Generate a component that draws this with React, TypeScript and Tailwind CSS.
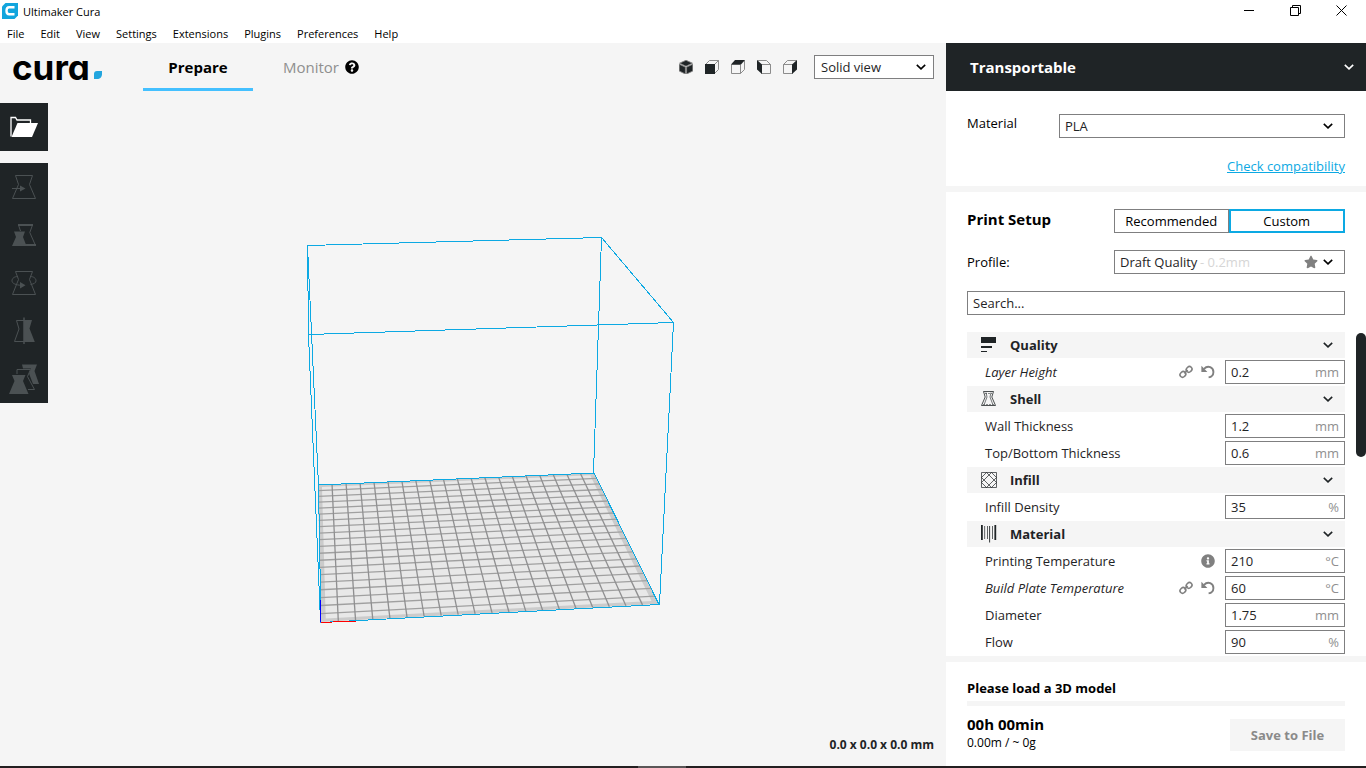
import { ReactNode, useState } from "react";
import { FaInfoCircle, FaQuestionCircle, FaStar } from "react-icons/fa";

const menuItems = ["File", "Edit", "View", "Settings", "Extensions", "Plugins", "Preferences", "Help"];

type Setting = {
  id: string;
  label: string;
  value: string;
  unit: string;
  changed?: boolean;
  info?: boolean;
};

type Category = {
  name: string;
  icon: ReactNode;
  settings: Setting[];
};

function Chevron({ className = "" }: { className?: string }) {
  return (
    <svg viewBox="0 0 10 6" className={`w-[10px] h-[6px] shrink-0 pointer-events-none ${className}`}>
      <path d="M0.8 0.8L5 4.8L9.2 0.8" fill="none" stroke="currentColor" strokeWidth="1.6" />
    </svg>
  );
}

function QualityIcon() {
  return (
    <svg viewBox="0 0 16 16" className="w-4 h-4">
      <path d="M0 0H15V6H0ZM0 9H11V11H0ZM0 14H6V15H0Z" fill="#1f2426" />
    </svg>
  );
}

function ShellIcon() {
  return (
    <svg viewBox="0 0 16 16" className="w-4 h-4" fill="none" stroke="#1f2426">
      <path d="M2.5 0.5H12.5L10.8 6L14.5 14.5H0.5L4.2 6Z" strokeWidth="0.8" />
      <path d="M5 1.5L6 6L3.2 13.5M10 1.5L9 6L11.8 13.5" strokeWidth="0.6" />
      <path d="M4 2.5H11M2 13.5H13" strokeWidth="0.5" strokeDasharray="2 1" />
    </svg>
  );
}

function InfillIcon() {
  return (
    <svg viewBox="0 0 16 16" className="w-4 h-4" fill="none" stroke="#1f2426" strokeWidth="0.7">
      <path d="M0.5 0.5H15.5V15.5H0.5Z" />
      <path d="M0.5 5.5L5.5 0.5M0.5 10.5L10.5 0.5M5.5 15.5L15.5 5.5M10.5 15.5L15.5 10.5" />
      <path d="M10.5 0.5L15.5 5.5M5.5 0.5L15.5 10.5M0.5 5.5L10.5 15.5M0.5 10.5L5.5 15.5" />
    </svg>
  );
}

function MaterialIcon() {
  return (
    <svg viewBox="0 0 16 18" className="w-4 h-[18px]" fill="#1f2426">
      <path d="M0 0H1.8V15H0ZM13.4 0H15.2V15H13.4Z" />
      <path d="M3.4 1H4.1V14H3.4ZM6 1H6.7V14H6ZM8.2 1H9.1V17.5H8.2ZM11 1H11.7V14H11Z" />
    </svg>
  );
}

function LinkIcon() {
  return (
    <svg viewBox="0 0 14 14" className="w-[14px] h-[14px]" fill="none" stroke="#808080" strokeWidth="1.6">
      <rect x="0.9" y="6.9" width="6" height="5" rx="2.5" transform="rotate(-45 3.9 9.4)" />
      <rect x="7.1" y="1.9" width="6" height="5" rx="2.5" transform="rotate(-45 10.1 4.4)" />
      <path d="M5.3 8.4L8.7 5" />
    </svg>
  );
}

function ResetIcon() {
  return (
    <svg viewBox="0 0 14 14" className="w-[14px] h-[14px]">
      <path d="M3 3.8C7 -0.2 12.6 2.4 12.4 7.2C12.3 9.8 10.6 11.9 7.6 12.4" fill="none" stroke="#808080" strokeWidth="1.9" />
      <path d="M0.4 0.8V7H6.4Z" fill="#808080" />
    </svg>
  );
}

const categories: Category[] = [
  {
    name: "Quality",
    icon: <QualityIcon />,
    settings: [{ id: "layer-height", label: "Layer Height", value: "0.2", unit: "mm", changed: true }],
  },
  {
    name: "Shell",
    icon: <ShellIcon />,
    settings: [
      { id: "wall", label: "Wall Thickness", value: "1.2", unit: "mm" },
      { id: "top-bottom", label: "Top/Bottom Thickness", value: "0.6", unit: "mm" },
    ],
  },
  {
    name: "Infill",
    icon: <InfillIcon />,
    settings: [{ id: "infill", label: "Infill Density", value: "35", unit: "%" }],
  },
  {
    name: "Material",
    icon: <MaterialIcon />,
    settings: [
      { id: "print-temp", label: "Printing Temperature", value: "210", unit: "°C", info: true },
      { id: "bed-temp", label: "Build Plate Temperature", value: "60", unit: "°C", changed: true },
      { id: "diameter", label: "Diameter", value: "1.75", unit: "mm" },
      { id: "flow", label: "Flow", value: "90", unit: "%" },
    ],
  },
];

const viewIcons = [
  {
    name: "3D view",
    icon: (
      <>
        <path d="M7 0.3L13.4 3.2L7 6.2L0.6 3.2Z" fill="#1f2426" />
        <path d="M0.2 4.2L6.4 7.1V14L0.2 11ZM13.8 4.2L7.6 7.1V14L13.8 11Z" fill="#1f2426" />
      </>
    ),
  },
  {
    name: "Front view",
    icon: (
      <>
        <path d="M0.5 4.5L4.5 0.5H13.5V9.5L9.5 13.5M9.5 4.5L13.5 0.5" />
        <path d="M0 4H10V14H0Z" fill="#1f2426" stroke="none" />
      </>
    ),
  },
  {
    name: "Top view",
    icon: (
      <>
        <path d="M0.5 4.5H9.5V13.5H0.5ZM9.5 13.5L13.5 9.5V0.5" />
        <path d="M0 4.5L4 0H14L10 4.5Z" fill="#1f2426" stroke="none" />
      </>
    ),
  },
  {
    name: "Left view",
    icon: (
      <>
        <path d="M4.5 4.5H13.5V13.5H4.5ZM0.5 0.5H9.5L13.5 4.5" />
        <path d="M0 0L5 4.5V14L0 9.5Z" fill="#1f2426" stroke="none" />
      </>
    ),
  },
  {
    name: "Right view",
    icon: (
      <>
        <path d="M0.5 4.5H9.5V13.5H0.5ZM0.5 4.5L4.5 0.5H13.5" />
        <path d="M14 0L9 4.5V14L14 9.5Z" fill="#1f2426" stroke="none" />
      </>
    ),
  },
];

const tools = [
  {
    name: "Move",
    icon: (
      <>
        <path d="M15.5 12.5H32.5L29.5 21.5L35.5 35.5H12.5L18.5 21.5Z" fill="none" />
        <path d="M12 25.5H21" fill="none" />
        <path d="M20 22.5L25.5 25.5L20 28.5Z" fill="#4b5153" stroke="none" />
      </>
    ),
  },
  {
    name: "Scale",
    icon: (
      <>
        <path d="M20.5 20L18.5 14M32.5 14L29.8 21.5L35.5 34.5" fill="none" />
        <path d="M18 13H33V15H18ZM24 33H36V35H24Z" fill="#4b5153" stroke="none" />
        <path d="M14 20.5H25L23 26L26.5 35H12L16 26Z" fill="#4b5153" stroke="none" />
      </>
    ),
  },
  {
    name: "Rotate",
    icon: (
      <>
        <path d="M15.5 12.5H32.5L29.5 20.5L35.5 35.5H12.5L18.5 20.5Z" fill="none" />
        <path d="M18 17.5C14 17.5 12 19.5 12 21.8C12 24.5 16 26 21 26.3M30 17.5C34 17.5 36 19.5 36 21.8C36 23.8 34 25 30.5 25.5" fill="none" />
        <path d="M20 23L25.5 26.2L20 29.4Z" fill="#4b5153" stroke="none" />
      </>
    ),
  },
  {
    name: "Mirror",
    icon: (
      <>
        <path d="M24 13.5H16.5L19 22L14.5 34.5H24" fill="none" />
        <path d="M24 13H32L29.5 21.5L34.8 35H24Z" fill="#4b5153" stroke="none" />
        <path d="M24 10.5V37" fill="none" strokeWidth="1.5" />
      </>
    ),
  },
  {
    name: "Per Model Settings",
    icon: (
      <>
        <path d="M22 9.5H37L34.5 16L39 29H33L29 18.5L31 13.5H23Z" fill="#4b5153" stroke="none" />
        <path d="M17 19V14.5H30.5L27.5 21.5L34.5 34.5H28" fill="none" />
        <path d="M12 20H25.5L23 26L28.5 39H9L14.5 26Z" fill="#4b5153" stroke="none" />
      </>
    ),
  },
];

// corners of the build plate on screen: back left, back right, front right, front left
const plate = [
  [318, 485],
  [594, 473],
  [659, 604],
  [321, 622],
];

// maps u, v in 0..1 onto the plate with perspective
function project(u: number, v: number) {
  const [[x0, y0], [x1, y1], [x2, y2], [x3, y3]] = plate;
  const dx1 = x1 - x2;
  const dx2 = x3 - x2;
  const dx3 = x0 - x1 + x2 - x3;
  const dy1 = y1 - y2;
  const dy2 = y3 - y2;
  const dy3 = y0 - y1 + y2 - y3;
  const det = dx1 * dy2 - dx2 * dy1;
  const g = (dx3 * dy2 - dx2 * dy3) / det;
  const h = (dx1 * dy3 - dx3 * dy1) / det;
  const w = g * u + h * v + 1;
  const x = ((x1 - x0 + g * x1) * u + (x3 - x0 + h * x3) * v + x0) / w;
  const y = ((y1 - y0 + g * y1) * u + (y3 - y0 + h * y3) * v + y0) / w;
  return `${x.toFixed(2)} ${y.toFixed(2)}`;
}

function quad(u0: number, v0: number, u1: number, v1: number) {
  return `M${project(u0, v0)}L${project(u1, v0)}L${project(u1, v1)}L${project(u0, v1)}Z`;
}

function Scene() {
  const steps = Array.from({ length: 19 }, (_, i) => (i + 1) / 20);

  return (
    <svg viewBox="0 91 946 675" className="absolute inset-0 w-full h-full">
      <path d={quad(0, 0, 1, 1)} fill="#cbcbcb" />
      <path d={quad(0.014, 0.02, 0.982, 0.98)} fill="#e8e8e8" />
      <g fill="none" strokeWidth="1.3">
        {steps.map((t) => (
          <path key={t} d={`M${project(0, t)}L${project(1, t)}`} stroke="#a0a0a0" />
        ))}
        {steps.map((t) => (
          <path key={t} d={`M${project(t, 0)}L${project(t, 1)}`} stroke="#8f8f90" />
        ))}
      </g>
      <g fill="none" stroke="#0ca9e3" strokeWidth="1" shapeRendering="crispEdges">
        <path d="M307.5 245.5L601.5 237.5L673.5 322.5L308.5 334.5Z" />
        <path d="M307.5 245.5L318.5 485.5M601.5 237.5L593.5 473.5M673.5 322.5L659.5 604.5M308.5 334.5L320.5 622" />
        <path d="M318.5 485L594 473L659 604.5L321 622.5Z" />
        <path d="M320.5 622V600" stroke="#0000ff" />
        <path d="M321 622.5L356 621" stroke="#ff0000" />
      </g>
    </svg>
  );
}

function SettingRow({ setting }: { setting: Setting }) {
  const [value, setValue] = useState(setting.value);

  return (
    <div className="flex items-center h-[26px] mb-px pl-[18px]">
      <label htmlFor={setting.id} className={`flex-1 text-[#1f2426] ${setting.changed ? "italic" : ""}`}>
        {setting.label}
      </label>
      <div className="flex items-center gap-2 mr-[10px]">
        {setting.changed && (
          <>
            <button type="button" aria-label="Linked setting">
              <LinkIcon />
            </button>
            <button type="button" aria-label="Reset to profile value">
              <ResetIcon />
            </button>
          </>
        )}
        {setting.info && <FaInfoCircle className="w-[14px] h-[14px] text-[#808080]" />}
      </div>
      <div className="flex items-center w-[120px] h-6 border border-[#7f7f80] bg-white px-[5px]">
        <input
          id={setting.id}
          type="text"
          value={value}
          onChange={(e) => setValue(e.target.value)}
          className="min-w-0 flex-1 outline-none text-[#1f2426]"
        />
        <span className="text-[#8f8f8f]">{setting.unit}</span>
      </div>
    </div>
  );
}

function TitleBar() {
  return (
    <header className="bg-white text-[11px] text-black">
      <div className="flex items-start h-6 px-0.5">
        <svg viewBox="0 0 16 16" className="w-4 h-4 mt-[3px]">
          <path d="M3.5 0H16V12.5L12.5 16H0V3.5Z" fill="#12a5dd" />
          <path d="M12.5 4.2H7.2C3.6 4.2 3.6 11.2 7.2 11.2H12.5" fill="none" stroke="#fff" strokeWidth="2.4" />
        </svg>
        <span className="ml-[5px] mt-0.5 flex-1">Ultimaker Cura</span>
        <button type="button" aria-label="Minimize" className="flex items-center justify-center w-[46px] h-5">
          <svg viewBox="0 0 11 11" className="w-[11px] h-[11px]">
            <path d="M0 5.5H10" stroke="#000" />
          </svg>
        </button>
        <button type="button" aria-label="Restore" className="flex items-center justify-center w-[46px] h-5">
          <svg viewBox="0 0 11 11" className="w-[11px] h-[11px]" fill="none" stroke="#000">
            <path d="M0.5 2.5H8.5V10.5H0.5ZM2.5 2.5V0.5H10.5V8.5H8.5" />
          </svg>
        </button>
        <button type="button" aria-label="Close" className="flex items-center justify-center w-[46px] h-5">
          <svg viewBox="0 0 11 11" className="w-[11px] h-[11px]">
            <path d="M0.5 0.5L10.5 10.5M10.5 0.5L0.5 10.5" stroke="#000" />
          </svg>
        </button>
      </div>
      <nav className="flex items-center h-[19px] pl-[7px] gap-4">
        {menuItems.map((item) => (
          <button key={item} type="button">
            {item}
          </button>
        ))}
      </nav>
    </header>
  );
}

function Viewport() {
  return (
    <main className="flex flex-col flex-1 min-w-0 bg-[#f5f5f5]">
      <div className="flex items-center h-12 px-3">
        <div className="flex items-end w-[131px]">
          <span className="font-[Inter] font-bold text-[35px] leading-8 text-black [font-feature-settings:'cv11']">cura</span>
          <svg viewBox="0 0 8 8" className="w-2 h-2 ml-1 mb-1">
            <path d="M3 0H8V3C8 6 6 8 3 8H0V3C0 1 1 0 3 0Z" fill="#22a5de" />
          </svg>
        </div>
        <button type="button" className="w-[110px] h-12 pt-[3px] border-b-3 border-[#44c0ff] text-[15px] font-bold text-black">
          Prepare
        </button>
        <button type="button" className="flex items-center gap-1.5 ml-[30px] text-[15px] text-[#8f8f8f]">
          Monitor
          <FaQuestionCircle className="w-[14px] h-[14px] text-black" />
        </button>
        <div className="flex items-center gap-3 ml-auto mr-[17px]">
          {viewIcons.map((view) => (
            <button key={view.name} type="button" aria-label={view.name}>
              <svg viewBox="0 0 14 14" className="w-[14px] h-[14px]" fill="none" stroke="#808080" strokeWidth="0.9">
                {view.icon}
              </svg>
            </button>
          ))}
        </div>
        <div className="flex items-center w-[120px] h-6 border border-[#7f7f80] bg-white pl-1.5 pr-[7px]">
          <select aria-label="View mode" className="appearance-none flex-1 outline-none text-[#1f2426]">
            <option>Solid view</option>
          </select>
          <Chevron />
        </div>
      </div>
      <div className="relative flex flex-col flex-1 pt-3">
        <Scene />
        <div className="relative flex flex-col gap-3 w-12">
          <button type="button" aria-label="Open file" className="h-12 bg-[#1f2426]">
            <svg viewBox="0 0 48 48" className="w-12 h-12">
              <path d="M11 33.5V14.5H15.5L17 17H30.5V20" fill="none" stroke="#fff" strokeWidth="1.3" />
              <path d="M17.5 20H38L32 34H11.5Z" fill="#fff" />
            </svg>
          </button>
          <div className="flex flex-col bg-[#1f2426]">
            {tools.map((tool) => (
              <button key={tool.name} type="button" aria-label={tool.name} className="h-12">
                <svg viewBox="0 0 48 48" className="w-12 h-12" stroke="#4b5153">
                  {tool.icon}
                </svg>
              </button>
            ))}
          </div>
        </div>
        <p className="relative mt-auto mb-3 mr-3 text-right text-[12px] leading-[18px] font-bold text-[#1f2426]">
          0.0 x 0.0 x 0.0 mm
        </p>
      </div>
    </main>
  );
}

function Sidebar() {
  const [mode, setMode] = useState("Custom");
  const [search, setSearch] = useState("");

  return (
    <aside className="flex flex-col w-[420px] shrink-0 bg-white">
      <button type="button" className="flex items-center justify-between h-12 pl-6 pr-3 bg-[#1f2426] text-white text-[15px] font-bold">
        Transportable
        <Chevron />
      </button>

      <section className="px-[21px] pt-[23px] pb-2 border-b-6 border-[#f5f5f5]">
        <div className="flex items-start justify-between">
          <label htmlFor="material" className="leading-[18px]">
            Material
          </label>
          <div className="flex items-center w-[286px] h-6 border border-[#7f7f80] pl-[5px] pr-[11px]">
            <select id="material" className="appearance-none flex-1 outline-none text-[#1f2426]">
              <option>PLA</option>
            </select>
            <Chevron />
          </div>
        </div>
        <div className="flex justify-end mt-[18px] h-[22px]">
          <a href="#compatibility" className="underline text-[#0ca9e3]">
            Check compatibility
          </a>
        </div>
      </section>

      <section className="relative flex flex-col gap-[17px] px-[21px] pt-[17px] border-b-6 border-[#f5f5f5]">
        <div className="flex items-start justify-between h-6">
          <h2 className="text-[15px] font-bold">Print Setup</h2>
          <div className="flex w-[231px] h-6">
            {["Recommended", "Custom"].map((name) => (
              <button
                key={name}
                type="button"
                onClick={() => setMode(name)}
                className={`flex-1 ${mode === name ? "border-2 border-[#0ca9e3]" : "border border-[#7f7f80]"}`}
              >
                {name}
              </button>
            ))}
          </div>
        </div>

        <div className="flex items-center justify-between h-6">
          <label htmlFor="profile">Profile:</label>
          <div className="flex items-center w-[231px] h-6 border border-[#7f7f80] pl-[5px] pr-[11px]">
            <select id="profile" className="appearance-none outline-none text-[#1f2426]">
              <option>Draft Quality</option>
            </select>
            <span className="ml-0.5 text-[#d6d6d6]">- 0.2mm</span>
            <FaStar className="w-[14px] h-[14px] ml-auto mr-[5px] text-[#808080]" />
            <Chevron />
          </div>
        </div>

        <input
          type="text"
          aria-label="Search settings"
          placeholder="Search..."
          value={search}
          onChange={(e) => setSearch(e.target.value)}
          className="h-6 border border-[#7f7f80] px-[5px] outline-none placeholder:text-[#1f2426]"
        />

        <div>
          {categories.map((category) => (
            <div key={category.name}>
              <button
                type="button"
                className="flex items-center w-full h-[26px] mb-px pl-[14px] pr-3 bg-[#f5f5f5] font-bold text-[#1f2426]"
              >
                {category.icon}
                <span className="ml-[13px] flex-1 text-left">{category.name}</span>
                <Chevron />
              </button>
              {category.settings.map((setting) => (
                <SettingRow key={setting.id} setting={setting} />
              ))}
            </div>
          ))}
        </div>
        {/* scroll thumb */}
        <div className="absolute right-0 top-[141px] w-[10px] h-[124px] rounded-full bg-[#1f2426]" />
      </section>

      <footer className="px-[21px] pt-[17px]">
        <p className="leading-[18px] font-bold">Please load a 3D model</p>
        <div className="mt-1 h-[5px] bg-[#f5f5f5]" />
        <div className="flex items-start justify-between mt-2">
          <div>
            <p className="text-[15px] leading-5 font-bold">00h 00min</p>
            <p className="text-[12px] leading-[18px]">0.00m / ~ 0g</p>
          </div>
          <button type="button" disabled className="w-[115px] h-8 mt-[5px] bg-[#f5f5f5] font-bold text-[#8a8a8a]">
            Save to File
          </button>
        </div>
      </footer>
    </aside>
  );
}

function App() {
  return (
    <div className="flex flex-col min-h-screen font-['Open_Sans',sans-serif] text-[13px] leading-5 text-black">
      <TitleBar />
      <div className="flex flex-1">
        <Viewport />
        <Sidebar />
      </div>
      <div className="flex justify-center h-0.5 pr-[42px] bg-[#231f20]">
        <div className="w-12 bg-[#5a5657]" />
      </div>
    </div>
  );
}

export default App;
